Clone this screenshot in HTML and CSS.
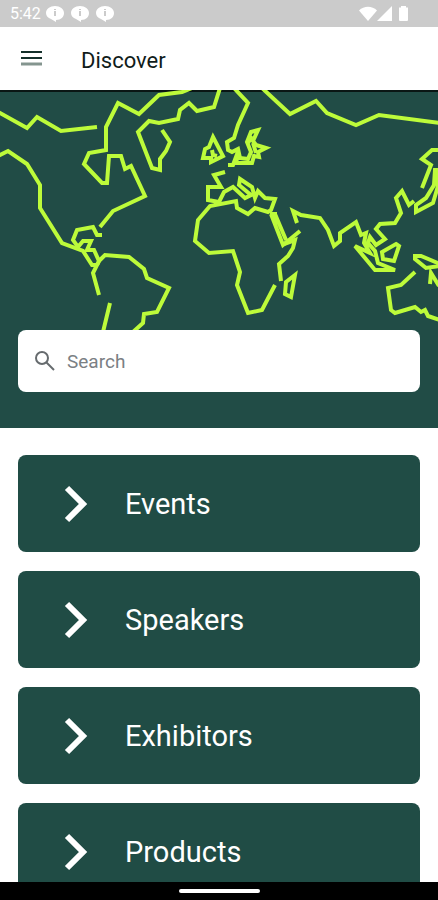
FILE: index.html
```
<!DOCTYPE html>
<html lang="en">
<head>
    <meta charset="UTF-8">
    <meta name="viewport" content="width=device-width, initial-scale=1">
    <title>Discover</title>
    <link rel="stylesheet" href="styles.css">
</head>
<body>
    <div class="status-bar">
        <span class="clock">5:42</span>
        <div class="notifications">
            <svg class="bubble" viewBox="0 0 18 16"><path d="M9 0C4 0 0 3 0 7c0 3 2 5 5 6l5 3v-2c5 0 8-3 8-7s-4-7-9-7z"/><path class="mark" d="M9 3v1M9 5v5"/></svg>
            <svg class="bubble" viewBox="0 0 18 16"><path d="M9 0C4 0 0 3 0 7c0 3 2 5 5 6l5 3v-2c5 0 8-3 8-7s-4-7-9-7z"/><path class="mark" d="M9 3v1M9 5v5"/></svg>
            <svg class="bubble" viewBox="0 0 18 16"><path d="M9 0C4 0 0 3 0 7c0 3 2 5 5 6l5 3v-2c5 0 8-3 8-7s-4-7-9-7z"/><path class="mark" d="M9 3v1M9 5v5"/></svg>
        </div>
        <svg class="signals" viewBox="0 0 50 16">
            <path d="M0 4.500C5-.5 13-.5 18 4.500L9 15z"/>
            <path d="M33 0v15H18z"/>
            <path d="M42 0h5v1.500h2V14q0 1-1 1h-7q-1 0-1-1V1.500H42z"/>
        </svg>
    </div>

    <header class="app-bar">
        <button type="button" class="menu-button" aria-label="Menu">
            <svg viewBox="0 0 21 16"><path d="M0 2h21M0 8h21"/><path class="faded" d="M0 14h21"/></svg>
        </button>
        <h1>Discover</h1>
    </header>

    <main>
        <section class="hero">
            <svg class="world-map" viewBox="0 90 438 240" aria-hidden="true">
                <!-- North America and Greenland -->
                <path d="M-2 112L0 113 27 128 37 117 61 131 97 127"/>
                <path d="M192 88L182 92 159 95 139 114 118 103 106 127V150L89 153 84 164 102 183H107L109 156H121L125 169 131 166 145 196 113 211 100 227"/>
                <path d="M220 88L214 107 197 111 189 103 180 110 178 119 159 123 149 121 138 132 152 168 160 170V159L166 151 170 142 162 130"/>
                <path d="M-2 156L8 151 27 164 40 185V208L62 243 83 251 92 265H97L93 273 99 295"/>
                <!-- Gulf and South America -->
                <path d="M102 235H97L93 227 77 230 73 240 78 247 83 241H91L87 250H94L99 261 105 255 129 257 144 269 147 278 169 288 157 312 144 314 143 323 133 332"/>
                <path d="M97 265L99 261M110 303L103 332"/>
                <!-- Europe -->
                <path d="M234 88L248 103 238 125 234 138 227 142 228 150 232 152 238 149 240 158 248 159 251 152 247 142 251 132 258 130 253 141 256 145 266 148 258 152 259 157 254 156 252 163H237L236 157 233 165H228"/>
                <path d="M248 143L252 136M253 143L256 153"/>
                <path d="M213 137L223 156 211 162V158H203L205 149 209 147zM212 150L213 155 217 156"/>
                <path d="M225 172L214 175 221 187H208V200L219 202 224 192 233 187 245 198 251 195 239 185 240 179 252 187 255 198 258 191 265 198 275 199 271 210 268 212 255 208 248 214 237 208 236 201 210 206 198 220 195 241 209 253 233 251 240 272 237 285 248 313 262 310 275 285"/>
                <!-- Red Sea, East Africa, Madagascar -->
                <path d="M271 214L283 245 300 231M275 214L286 240M270 214H277"/>
                <path d="M284 244L295 240 293 248 288 256 279 264 281 281"/>
                <path d="M295 275L291 297 285 294 286 282z"/>
                <!-- Asia -->
                <path d="M262 88L290 114 316 101 327 113 356 125 379 115 440 123"/>
                <path d="M297 223L293 211 301 215 320 218 328 230 334 246 340 241V233L356 222 361 235 366 233 364 243 370 253 355 246 375 270H395L378 263 375 251 368 243 370 237 376 245 385 239 376 229 380 224 395 223 401 213 396 198 402 191 409 205 414 201"/>
                <path d="M396 244L399 246 394 261 383 259 382 252z"/>
                <path d="M440 150H432L422 159 431 165 422 188"/>
                <path d="M435 170L434 185 426 198 416 205V212L433 203 438 186V170zM436 171V184"/>
                <!-- Oceania -->
                <path d="M440 264L421 256H415V259L426 268 440 266"/>
                <path d="M415 272L401 285 388 288 391 310 395 313 415 307 421 312 425 310 428 316 440 320M430 284L431 273 439 286"/>
            </svg>
            <div class="search-box">
                <svg viewBox="0 0 20 20" aria-hidden="true"><circle cx="7" cy="7" r="6"/><path d="M11.500 11.500L19 19"/></svg>
                <input type="search" placeholder="Search" aria-label="Search">
            </div>
        </section>

        <nav class="menu-list">
            <a class="menu-item" href="#events">
                <svg viewBox="0 0 24 38"><path d="M3 3L19 19 3 35"/></svg>
                Events
            </a>
            <a class="menu-item" href="#speakers">
                <svg viewBox="0 0 24 38"><path d="M3 3L19 19 3 35"/></svg>
                Speakers
            </a>
            <a class="menu-item" href="#exhibitors">
                <svg viewBox="0 0 24 38"><path d="M3 3L19 19 3 35"/></svg>
                Exhibitors
            </a>
            <a class="menu-item" href="#products">
                <svg viewBox="0 0 24 38"><path d="M3 3L19 19 3 35"/></svg>
                Products
            </a>
        </nav>
    </main>

    <div class="gesture-bar"><span class="handle"></span></div>
</body>
</html>
```
FILE: styles.css
```
* {
    box-sizing: border-box;
}
body {
    margin: 0;
    height: 100vh;
    display: flex;
    flex-direction: column;
    overflow: hidden;
    background: #fff;
    font-family: Roboto, sans-serif;
}
.status-bar {
    display: flex;
    flex: none;
    align-items: center;
    height: 27px;
    padding: 0 29px 0 10px;
    background: #cbcbcb;
    color: #fff;
    font-size: 16px;
}
.notifications {
    display: flex;
    gap: 7px;
    margin-left: 5px;
}
.bubble {
    width: 18px;
    height: 16px;
    fill: #fff;
}
.bubble .mark {
    stroke: #cbcbcb;
    stroke-width: 2;
}
.signals {
    width: 50px;
    height: 16px;
    margin-left: auto;
    fill: #fff;
}
.app-bar {
    display: flex;
    flex: none;
    align-items: center;
    gap: 39px;
    height: 63px;
    padding: 3px 21px 0;
}
.app-bar h1 {
    margin: 0;
    color: #101c1a;
    font-size: 22px;
    font-weight: 400;
}
.menu-button {
    display: flex;
    padding: 0;
    border: none;
    background: none;
    cursor: pointer;
}
.menu-button svg {
    width: 21px;
    height: 16px;
    margin-bottom: 4px;
    stroke: #14302b;
    stroke-width: 2;
}
.menu-button .faded {
    stroke: #84958f;
    stroke-width: 3;
}
main {
    flex: 1;
    min-height: 0;
    overflow: hidden;
}
.hero {
    padding-bottom: 36px;
    border-top: 2px solid #0a1614;
    background: #214c46;
}
.world-map {
    display: block;
    width: 100%;
    margin-top: -2px;
    fill: none;
    stroke: #bdfb3a;
    stroke-width: 4;
}
.search-box {
    display: flex;
    align-items: center;
    gap: 12px;
    height: 62px;
    margin: 0 18px;
    padding: 0 17px;
    border-radius: 8px;
    background: #fff;
}
.search-box svg {
    flex: none;
    width: 20px;
    height: 20px;
    fill: none;
    stroke: #666b6e;
    stroke-width: 2;
}
.search-box input {
    flex: 1;
    min-width: 0;
    padding: 0;
    border: none;
    outline: none;
    background: none;
    color: #222;
    font-family: inherit;
    font-size: 19px;
}
.search-box input::placeholder {
    color: #7b7f84;
}
.menu-list {
    display: flex;
    flex-direction: column;
    gap: 19px;
    padding: 27px 18px;
}
.menu-item {
    display: flex;
    align-items: center;
    gap: 37px;
    height: 97px;
    padding: 0 46px;
    border-radius: 8px;
    background: #204c45;
    color: #fff;
    font-size: 29px;
    text-decoration: none;
}
.menu-item svg {
    width: 24px;
    height: 38px;
    fill: none;
    stroke: #fff;
    stroke-width: 6;
}
.gesture-bar {
    display: flex;
    flex: none;
    justify-content: center;
    align-items: center;
    height: 18px;
    background: #000;
}
.handle {
    width: 81px;
    height: 4px;
    border-radius: 2px;
    background: #fff;
}
```
